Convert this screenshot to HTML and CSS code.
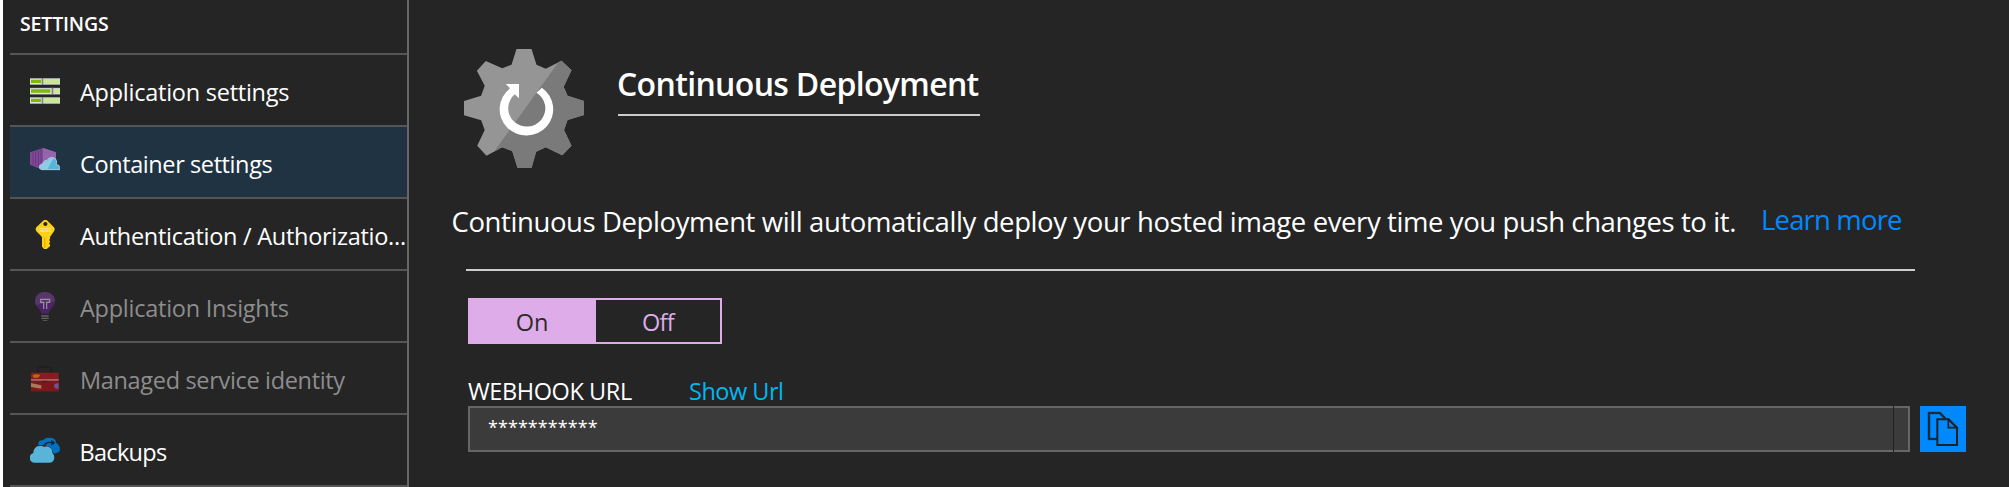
FILE: index.html
```
<!DOCTYPE html>
<html lang="en">
<head>
<meta charset="utf-8">
<title>Container settings</title>
<link rel="stylesheet" href="styles.css">
</head>
<body>
<nav class="sidebar">
  <h2 class="sidebar-title">SETTINGS</h2>
  <ul class="menu">
    <li class="item">
      <svg class="icon" viewBox="90 225 90 90">
        <g fill="#8a8d90"><path d="M90 234h90v21H90zM90 263h90v21H90zM90 291h90v21H90z"/></g>
        <g fill="#dfe2e0"><path d="M90 236h90v17H90zM90 265h90v17H90zM90 293h90v17H90z"/></g>
        <g fill="#cbe696"><path d="M132 237h47v14h-47zM162 266h17v14h-17zM132 294h47v14h-47z"/></g>
        <g fill="#7fba00"><path d="M93 239h30v10H93zM93 268h58v10H93zM93 296h30v10H93z"/></g>
        <g fill="#808386"><path d="M125 234h5v21h-5zM155 263h5v21h-5zM125 291h5v21h-5z"/></g>
      </svg>
      <span class="label app">Application settings</span>
    </li>
    <li class="item selected">
      <svg class="icon" viewBox="90 441 90 90">
        <path fill="#804998" d="M90 457l39-13 39 13v37l-39 16-39-16z"/>
        <path fill="#9664ab" d="M129 444l39 13v37l-39 16z"/>
        <path fill="none" stroke="#5f3277" stroke-width="2" d="M99 457v38M107 454v44M115 451v50M123 448v56"/>
        <path fill="#59b4d9" stroke="#d9eef7" stroke-width="2" d="M126 509c-11 0-11-17 2-17 1-9 9-11 13-10 5-13 29-13 29 5 0 3-1 5-2 7 11 0 13 6 12 15z"/>
        <path fill="#8ccbe4" d="M126 508c-10-1-9-15 3-15 1-9 8-10 13-9 3-8 12-12 19-9l-19 33z"/>
      </svg>
      <span class="label container">Container settings</span>
    </li>
    <li class="item">
      <svg class="icon" viewBox="90 657 90 90">
        <path fill="#fcd116" fill-rule="evenodd" d="M132 660h8l22 22q4 6 0 12l-12 17v6l-3 3 3 3v4l-3 3 3 4v5l-11 9h-6l-7-8v-29l-17-17q-4-6 0-12zM136 666a6 6 0 1 0 .1 0z"/>
        <path fill="#fde575" d="M118 684h36v4h-36zM118 691h36v4h-36z"/>
        <path fill="#e8b400" d="M132 712h4v32h-4z"/>
      </svg>
      <span class="label auth">Authentication / Authorizatio...</span>
    </li>
    <li class="item disabled">
      <svg class="icon" viewBox="90 153 90 90">
        <path fill="#4b2463" d="M135 156c17 0 30 12 30 28 0 17-17 22-19 37h-22c-2-15-19-20-19-37 0-16 13-28 30-28z"/>
        <path fill="#593669" d="M135 156c17 0 30 12 30 28l-57 12c-9-22 5-40 27-40z"/>
        <path fill="none" stroke="#9d8fa5" stroke-width="3.5" d="M131 207v-20h-9v-9h27v9h-9v20"/>
        <path fill="#666" d="M124 226h22v4h-22zM124 233h22v4h-22z"/>
        <path fill="#555" d="M128 240h15l-4 5h-7z"/>
      </svg>
      <span class="label app">Application Insights</span>
    </li>
    <li class="item disabled">
      <svg class="icon" viewBox="90 369 90 90">
        <path fill="none" stroke="#1e1e1f" stroke-width="4.5" d="M114 398v-13q0-3 3-3h34q3 0 3 3v13"/>
        <path fill="#8b1b20" d="M96 398h77q3 0 3 3v53H93v-53q0-3 3-3z"/>
        <path fill="#7c171b" d="M93 423h83v31H93z"/>
        <path fill="#a59090" d="M93 418h83v3.500H93z"/>
        <path fill="#b36a13" d="M98 405q12-5 23 0-3 9-15 9-9-1-8-9z"/>
        <path fill="#a97a57" d="M93 429l31 7v10l-31-5z"/>
        <path fill="#75508f" d="M176 430c-19-3-19 19 0 16z"/>
        <path fill="#571014" d="M128 422h13v5h-13z" opacity=".5"/>
      </svg>
      <span class="label identity">Managed service identity</span>
    </li>
    <li class="item">
      <svg class="icon" viewBox="90 585 90 90">
        <path fill="#0072c6" d="M115 615c-2-11 5-15 14-14 6-9 18-9 24-7 9 0 15 6 15 14 13 8 16 24 6 29-6 4-12 5-15 1l-21-22z"/>
        <path fill="none" stroke="#252525" stroke-width="4" d="M132 616c6-8 15-10 24-8"/>
        <path fill="#252525" d="M153 599l13 9-12 9z"/>
        <path fill="#59b4d9" stroke="#252525" stroke-width="3" paint-order="stroke" d="M104 668c-19 0-19-26-4-28 0-20 19-28 32-19 14-5 26 4 25 18 10 8 7 29-8 29z"/>
      </svg>
      <span class="label backups">Backups</span>
    </li>
  </ul>
</nav>
<main class="content">
  <header class="header">
    <svg class="gear" viewBox="67 57 336 357" preserveAspectRatio="none">
      <defs><clipPath id="shade"><path d="M340 84L145 374V420H410V84z"/></clipPath></defs>
      <path fill="#959595" d="M214 57H256L270 104 296 116 340 92 368 121 346 170 357 197 403 213V255L357 270 347 300 368 347 342 376 296 352 269 365 256 414H217L202 363 174 352 130 377 104 347 125 300 115 271 67 256V213L115 197 125 167 103 122 128 93 174 115 200 104z"/>
      <path clip-path="url(#shade)" fill="#7a7a7a" d="M214 57H256L270 104 296 116 340 92 368 121 346 170 357 197 403 213V255L357 270 347 300 368 347 342 376 296 352 269 365 256 414H217L202 363 174 352 130 377 104 347 125 300 115 271 67 256V213L115 197 125 167 103 122 128 93 174 115 200 104z"/>
      <path fill="#fff" d="M285 173A75 79 0 1 1 196 175L184 162H221V205L209 193A52 55 0 1 0 270 188z"/>
    </svg>
    <h1 class="title">Continuous Deployment</h1>
  </header>
  <div class="intro">
    <p class="description">Continuous Deployment will automatically deploy your hosted image every time you push changes to it.</p>
    <a class="learn">Learn more</a>
  </div>
  <div class="form">
    <div class="toggle"><span class="option on">On</span><span class="option off">Off</span></div>
    <div class="labels"><span class="webhook">WEBHOOK URL</span><a class="show">Show Url</a></div>
    <div class="field">
      <div class="input"><span class="value">***********</span><span class="divider"></span></div>
      <div class="copy">
        <svg class="copy-icon" viewBox="240 78 138 138">
          <path fill="none" stroke="#0b4f87" stroke-width="8" d="M291 177H267V99H300L316 116"/>
          <path fill="none" stroke="#202224" stroke-width="5" d="M291 177H267V99H300L316 116"/>
          <path fill="#0089ff" stroke="#202224" stroke-width="6" d="M292 118H326L351 143V195H292z"/>
          <path fill="#0089ff" stroke="#202224" stroke-width="5" d="M325 119V143H350z"/>
        </svg>
      </div>
    </div>
  </div>
</main>
</body>
</html>
```
FILE: styles.css
```
* { box-sizing: border-box; }
body {
  margin: 0;
  height: 487px;
  padding-left: 3px;
  display: flex;
  overflow: hidden;
  background: #fff;
  color: #fff;
  font: 23.5px/32px "Open Sans", "Noto Sans", sans-serif;
}
.sidebar {
  width: 406px;
  flex: none;
  padding-left: 7px;
  background: #252525;
  border-right: 2px solid #666;
}
.sidebar-title {
  margin: 0;
  height: 53px;
  padding: 8px 0 0 10px;
  font-size: 19.5px;
  font-weight: 600;
  letter-spacing: -0.15px;
}
.menu { margin: 0; padding: 0; list-style: none; border-bottom: 2px solid #555; }
.item {
  height: 72px;
  padding-left: 20px;
  display: flex;
  align-items: center;
  gap: 20px;
  border-top: 2px solid #555;
}
.selected { background: #203343; }
.disabled .label { color: #8d8d8d; }
.icon { width: 30px; height: 30px; flex: none; }
.label { padding-top: 4px; white-space: nowrap; }
.app { letter-spacing: -0.25px; }
.auth { letter-spacing: -0.28px; }
.container { letter-spacing: -0.4px; }
.identity { letter-spacing: -0.33px; }
.backups { margin-left: -0.5px; letter-spacing: -0.7px; }
.content { flex: 1; padding-left: 43px; background: #252525; }
.header { height: 190px; padding: 49px 0 0 12px; display: flex; gap: 34px; align-items: flex-start; }
.gear { width: 120px; height: 119px; }
.title {
  margin: 13px 0 0;
  height: 54px;
  width: 362px;
  white-space: nowrap;
  border-bottom: 2px solid #ccc;
  font-size: 32px;
  line-height: 44px;
  font-weight: 600;
  text-indent: -1px;
  letter-spacing: -0.66px;
}
.intro {
  margin-left: 14px;
  width: 1449px;
  height: 81px;
  border-bottom: 2px solid #ccc;
  display: flex;
  font-size: 27.5px;
  line-height: 40px;
  white-space: nowrap;
}
.description { width: 1310px; flex: none; margin: 12px 0 0 -14.5px; letter-spacing: -0.4px; }
.learn { margin: 10px 0 0 -0.5px; color: #0089ff; letter-spacing: -0.83px; }
.form { padding: 27px 0 0 16px; }
.toggle { width: 254px; height: 46px; display: flex; border: 2px solid #deace9; text-align: center; line-height: 44px; }
.option { flex: 1; height: 42px; color: #deace9; }
.on { flex: 0 0 126px; padding-right: 2px; background: #deace9; color: #2b2b2b; }
.off { letter-spacing: -0.7px; }
.labels { height: 62px; padding-top: 31px; display: flex; }
.webhook { width: 221px; letter-spacing: -0.4px; }
.show { color: #00b8f1; letter-spacing: -0.5px; }
.field { display: flex; gap: 10px; }
.input {
  position: relative;
  width: 1442px;
  height: 46px;
  padding: 6px 0 0 18px;
  border: 2px solid #666;
  background: #3b3b3b;
}
.value { display: block; font-size: 18px; line-height: 26px; letter-spacing: 0.05px; }
.divider { position: absolute; top: -2px; right: 14px; width: 1px; height: 46px; background: #202020; }
.copy { width: 46px; height: 46px; background: #0089ff; }
.copy-icon { display: block; width: 46px; height: 46px; }
```
